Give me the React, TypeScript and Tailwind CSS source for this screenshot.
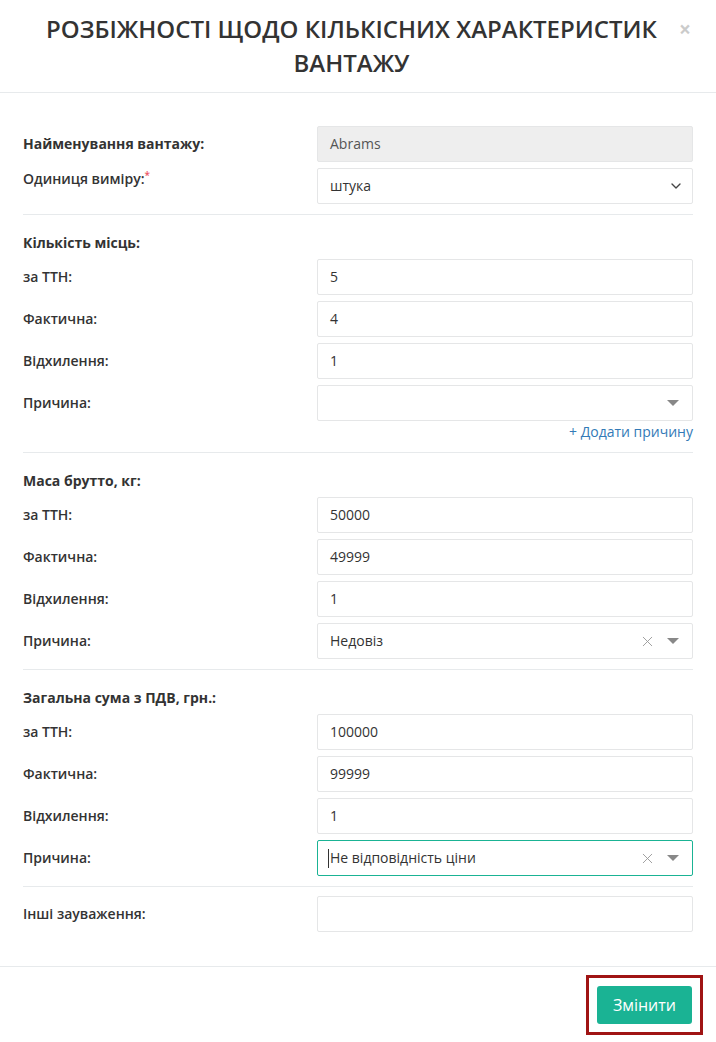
import { ChevronDown, X } from 'lucide-react'

type Row = { label: string; value?: string; kind?: 'input' | 'select2'; focused?: boolean }

const font = { fontFamily: '"Open Sans", "Liberation Sans", sans-serif' }

function Field({ row }: { row: Row }) {
  return (
    <div className="flex items-center h-9">
      <div className="w-[294px] text-sm font-semibold text-[#333]">{row.label}</div>
      {row.kind === 'select2' ? (
        <div
          className={`flex-1 h-9 flex items-center px-3 border rounded-[2px] bg-white ${
            row.focused ? 'border-[#1ab394]' : 'border-[#e5e6e7]'
          }`}
        >
          {row.focused && <span className="w-px h-[19px] bg-[#333] -ml-[2px] mr-px" />}
          <span className="flex-1 text-sm text-[#333]">{row.value}</span>
          {row.value && <X size={17} strokeWidth={1.3} className="text-[#999] mr-[11px]" />}
          <span className="w-0 h-0 border-x-[6px] border-x-transparent border-t-[6px] border-t-[#888] mr-[1px]" />
        </div>
      ) : (
        <div className="flex-1 h-9 flex items-center px-3 border border-[#e5e6e7] rounded-[2px] bg-white text-sm text-[#333]">
          {row.value}
        </div>
      )}
    </div>
  )
}

function Section({ title, rows, extra }: { title: string; rows: Row[]; extra?: React.ReactNode }) {
  return (
    <div className="border-t border-[#e7eaec] pt-[18px] mt-[10px]">
      <div className="h-5 flex items-center text-sm font-bold text-[#333] mb-[6px]">{title}</div>
      <div className="flex flex-col gap-[6px]">
        {rows.map((r, i) => (
          <Field key={i} row={r} />
        ))}
      </div>
      {extra}
    </div>
  )
}

export default function App() {
  return (
    <div className="w-[716px] h-[1042px] bg-white relative" style={font}>
      <div className="relative border-b border-[#e7eaec] pl-[30px] pr-[43px] pt-3 pb-3">
        <h1 className="text-center text-[24px] leading-[34px] font-semibold text-[#333]">
          РОЗБІЖНОСТІ ЩОДО КІЛЬКІСНИХ ХАРАКТЕРИСТИК ВАНТАЖУ
        </h1>
        <button className="absolute right-[25px] top-[19px] text-[21px] font-bold text-black opacity-20 leading-none">
          ×
        </button>
      </div>

      <div className="px-[23px] pt-[33px] pb-[34px]">
        <div className="flex flex-col gap-[6px]">
          <div className="flex items-center h-9">
            <div className="w-[294px] text-sm font-bold text-[#333]">Найменування вантажу:</div>
            <div className="flex-1 h-9 flex items-center px-3 border border-[#e5e6e7] rounded-[2px] bg-[#eeeeee] text-sm text-[#555]">
              Abrams
            </div>
          </div>
          <div className="flex h-9">
            <div className="w-[294px] text-sm font-semibold text-[#333] pt-[1px]">
              Одиниця виміру:<sup className="text-[#ed5565] text-[10px]">*</sup>
            </div>
            <div className="flex-1 h-9 flex items-center px-3 border border-[#e5e6e7] rounded-[2px] bg-white text-sm text-[#333]">
              <span className="flex-1">штука</span>
              <ChevronDown size={16} strokeWidth={2} className="text-[#444] -mr-[4px]" />
            </div>
          </div>
        </div>

        <Section
          title="Кількість місць:"
          rows={[
            { label: 'за ТТН:', value: '5' },
            { label: 'Фактична:', value: '4' },
            { label: 'Відхилення:', value: '1' },
            { label: 'Причина:', kind: 'select2' },
          ]}
          extra={
            <div className="text-right text-sm text-[#337ab7] leading-[20px] mt-[1px]">+ Додати причину</div>
          }
        />

        <Section
          title="Маса брутто, кг:"
          rows={[
            { label: 'за ТТН:', value: '50000' },
            { label: 'Фактична:', value: '49999' },
            { label: 'Відхилення:', value: '1' },
            { label: 'Причина:', kind: 'select2', value: 'Недовіз' },
          ]}
        />

        <Section
          title="Загальна сума з ПДВ, грн.:"
          rows={[
            { label: 'за ТТН:', value: '100000' },
            { label: 'Фактична:', value: '99999' },
            { label: 'Відхилення:', value: '1' },
            { label: 'Причина:', kind: 'select2', value: 'Не відповідність ціни', focused: true },
          ]}
        />

        <div className="border-t border-[#e7eaec] pt-[9px] mt-[10px]">
          <Field row={{ label: 'Інші зауваження:', value: '' }} />
        </div>
      </div>

      <div className="border-t border-[#e7eaec] flex justify-end pr-[24px] pt-[19px]">
        <div className="relative">
          <button className="h-[38px] px-4 rounded-[3px] bg-[#1ab394] text-white text-base">Змінити</button>
          <div className="absolute -left-[11px] -right-[11px] -top-[11px] -bottom-[11px] border-[3px] border-[#a01414] pointer-events-none" />
        </div>
      </div>
    </div>
  )
}
